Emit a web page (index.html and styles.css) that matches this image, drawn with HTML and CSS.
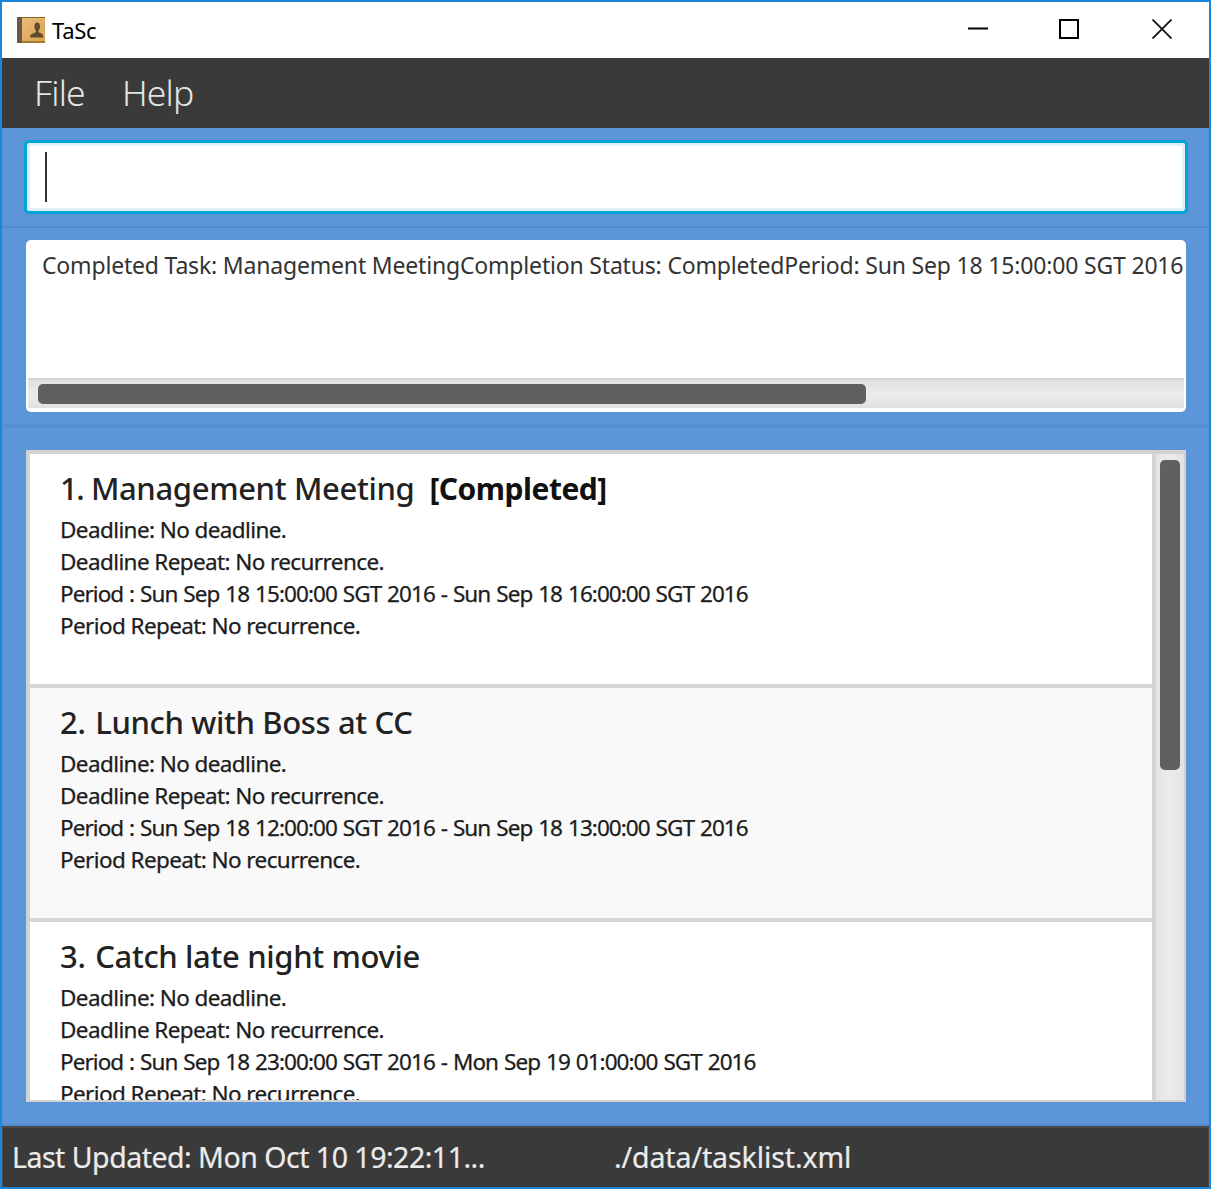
FILE: index.html
```html
<!DOCTYPE html>
<html lang="en">
<head>
<meta charset="utf-8">
<title>TaSc</title>
<link rel="stylesheet" href="styles.css">
</head>
<body>
<div class="window">
  <header class="titlebar">
    <svg class="app-icon" width="30" height="28" viewBox="0 0 30 28">
      <defs>
        <linearGradient id="cover" x1="0" y1="0" x2="1" y2="1">
          <stop offset="0" stop-color="#e9c07e"/>
          <stop offset="1" stop-color="#d9a04e"/>
        </linearGradient>
      </defs>
      <rect x="1" y="1" width="28" height="26" rx="1" fill="url(#cover)"/>
      <rect x="1" y="1" width="28" height="1" fill="#8a6420"/>
      <rect x="1" y="25" width="28" height="2" fill="#a87a30"/>
      <rect x="1" y="1" width="5" height="26" fill="#6b5648"/>
      <path d="M15 21h13v-2.500c-1-1.500-3.500-2-4.500-3v-1.500c1-1 1.500-2.500 1.500-4 0-2.500-1.300-4-2.800-4s-2.800 1.500-2.800 4c0 1.500.5 3 1.500 4v1.500c-1 1-3.500 1.500-5.400 3z" fill="#5d4a30" transform="translate(-1 .5)"/>
    </svg>
    <span class="app-name">TaSc</span>
    <div class="controls">
      <svg width="20" height="20" viewBox="0 0 20 20"><path d="M0 9.500h20" stroke="#000" stroke-width="2"/></svg>
      <svg width="20" height="20" viewBox="0 0 20 20"><rect x="1" y="1" width="18" height="18" fill="none" stroke="#000" stroke-width="2"/></svg>
      <svg class="close" width="20" height="20" viewBox="0 0 20 20"><path d="M.5.500l19 19M19.500.500l-19 19" stroke="#111" stroke-width="1.800"/></svg>
    </div>
  </header>
  <nav class="menubar">
    <span class="menu-item">File</span>
    <span class="menu-item">Help</span>
  </nav>
  <section class="pane command-pane">
    <div class="command-box"><span class="caret"></span></div>
  </section>
  <section class="pane result-pane">
    <div class="result-box">
      <div class="result-text">Completed Task: Management MeetingCompletion Status: CompletedPeriod: Sun Sep 18 15:00:00 SGT 2016 - Sun Sep 18 16:00:00 SGT 2016</div>
      <div class="hscroll"><div class="hthumb"></div></div>
    </div>
  </section>
  <section class="list-pane">
    <div class="list">
      <div class="cards">
        <article class="card">
          <h2 class="card-title"><span class="num num-one">1.</span> Management Meeting<strong class="status">[Completed]</strong></h2>
          <p class="line">Deadline: No deadline.</p>
          <p class="line">Deadline Repeat: No recurrence.</p>
          <p class="line line-period">Period : Sun Sep 18 15:00:00 SGT 2016 - Sun Sep 18 16:00:00 SGT 2016</p>
          <p class="line">Period Repeat: No recurrence.</p>
        </article>
        <article class="card card-alt">
          <h2 class="card-title"><span class="num">2.</span> Lunch with Boss at CC</h2>
          <p class="line">Deadline: No deadline.</p>
          <p class="line">Deadline Repeat: No recurrence.</p>
          <p class="line line-period">Period : Sun Sep 18 12:00:00 SGT 2016 - Sun Sep 18 13:00:00 SGT 2016</p>
          <p class="line">Period Repeat: No recurrence.</p>
        </article>
        <article class="card">
          <h2 class="card-title"><span class="num">3.</span> Catch late night movie</h2>
          <p class="line">Deadline: No deadline.</p>
          <p class="line">Deadline Repeat: No recurrence.</p>
          <p class="line line-period">Period : Sun Sep 18 23:00:00 SGT 2016 - Mon Sep 19 01:00:00 SGT 2016</p>
          <p class="line">Period Repeat: No recurrence.</p>
        </article>
      </div>
      <div class="vscroll"><div class="vthumb"></div></div>
    </div>
  </section>
  <footer class="statusbar">
    <span class="status-left">Last Updated: Mon Oct 10 19:22:11...</span>
    <span class="status-right">./data/tasklist.xml</span>
  </footer>
</div>
</body>
</html>
```
FILE: styles.css
```css
* { box-sizing: border-box; }
html, body { margin: 0; height: 100%; }
body { font-family: "Noto Sans", "Open Sans", sans-serif; overflow: hidden; }
.window {
  width: 1211px; height: 1189px;
  border: 2px solid #1a86dc;
  display: flex; flex-direction: column;
  background: #5c96d9;
}
.titlebar {
  height: 56px; flex: none; background: #fff;
  display: flex; align-items: center; padding-left: 14px;
}
.app-icon { flex: none; margin-top: -1px; }
.app-name { font-size: 22px; color: #000; margin-left: 6px; letter-spacing: -0.3px; }
.controls { margin-left: auto; display: flex; gap: 71px; padding-right: 37px; margin-top: -2px; }
.controls svg { display: block; }
.controls .close { margin-left: 2px; }
.menubar {
  height: 70px; flex: none; background: #3a3a3a;
  display: flex; align-items: center; gap: 37px; padding: 0 0 2px 32px;
}
.menu-item { font-size: 35.5px; font-weight: 300; color: #e4e4e4; letter-spacing: -0.8px; }
.pane { flex: none; }
.command-pane { height: 100px; padding: 12px 21px 0 22px; border-bottom: 2px solid #528cd0; }
.command-box {
  height: 74px; background: #fff; border: 3px solid #00a5d6; border-radius: 5px;
  box-shadow: inset 0 0 0 3px #def1f7;
  padding: 9px 0 0 18px;
}
.caret { display: block; width: 2px; height: 50px; background: #333; }
.result-pane { height: 200px; padding: 12px 23px 0 24px; border-bottom: 4px solid #558fd3; }
.result-box {
  height: 172px; background: #fff; border-radius: 5px; padding: 0 2px 4px;
  display: flex; flex-direction: column; overflow: hidden;
}
.result-text {
  flex: 1; font-size: 23px; letter-spacing: -0.18px; color: #333; white-space: nowrap; overflow: hidden;
  padding: 8px 0 0 14px; line-height: 34px;
}
.hscroll {
  height: 30px; flex: none; border-top: 2px solid #d4d4d4;
  background: linear-gradient(#e0e0e0, #ececec 50%, #e0e0e0);
  padding: 4px 0 0 10px;
}
.hthumb { width: 828px; height: 20px; background: #606060; border-radius: 5px; }
.list-pane { flex: 1; min-height: 0; padding: 22px 23px 22px 24px; border-bottom: 2px solid #528cd0; }
.list {
  height: 100%; display: flex; overflow: hidden;
  border: 4px solid #d2d2d2; border-bottom-width: 2px; border-right-width: 2px; background: #fff;
}
.cards { flex: 1; min-width: 0; overflow: hidden; }
.card { height: 234px; background: #fff; border-bottom: 4px solid #d6d6d6; padding: 12px 0 0 30px; }
.card-alt { background: #f9f9f9; }
.card-title { margin: 0 0 4px; font-size: 31px; letter-spacing: -0.35px; font-weight: 500; line-height: 44px; color: #222; }
.num { margin-right: 2px; }
.num-one { margin-right: 0; letter-spacing: -1.5px; }
.status { margin-left: 15px; font-weight: 700; color: #111; font-size: 30px; letter-spacing: -0.5px; line-height: 1; }
.line { margin: 0; font-size: 22.5px; letter-spacing: -0.6px; line-height: 32px; color: #1c1c1c; -webkit-text-stroke: 0.25px #1c1c1c; }
.line-period { letter-spacing: -0.94px; word-spacing: 1px; }
.vscroll {
  width: 32px; flex: none; border-left: 4px solid #d4d4d4;
  background: linear-gradient(90deg, #e4e4e4, #ececec 50%, #e2e2e2);
  padding: 6px 0 0 4px;
}
.vthumb { width: 20px; height: 310px; background: #606060; border-radius: 5px; }
.statusbar {
  height: 61px; flex: none; background: #3a3a3a; border: 1px solid #4a4a4a; border-top-width: 2px; border-bottom: 0;
  display: flex; align-items: center; padding: 0 0 2px 9px;
  font-size: 28.5px; color: #ececec; white-space: nowrap; -webkit-text-stroke: 0.2px #ececec;
}
.status-left { width: 602px; flex: none; letter-spacing: -0.5px; }
.status-right { letter-spacing: -0.1px; }
```
